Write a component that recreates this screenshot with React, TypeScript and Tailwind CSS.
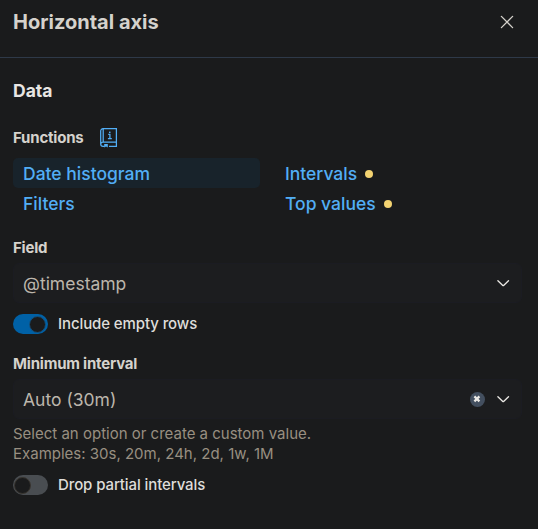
import type { ReactNode } from 'react';

function Label({ children }: { children: ReactNode }) {
  return <div className="text-[15px] leading-5 font-bold tracking-[-0.2px] text-[#d5d2cc]">{children}</div>;
}

function Chevron() {
  return (
    <svg width="20" height="20" viewBox="0 0 20 20" fill="none" stroke="#ebe9e5" strokeWidth="1.35" strokeLinecap="round">
      <path d="M4.9 7.8l4.9 4.6a.6.6 0 0 0 .8 0l4.9-4.6" />
    </svg>
  );
}

function DocsIcon() {
  return (
    <svg width="18" height="20" viewBox="0 0 18 20" fill="none" stroke="#52aef5" strokeWidth="1.25">
      <path d="M4.6 18.4H3A2.3 2.3 0 0 1 .7 16.1V3A2.3 2.3 0 0 1 3 .7h13.4v13.4H3a2.1 2.1 0 0 0-2.1 1.6M3.2.7v13.4M9 18.4h7.4v-4.3" />
      <path d="M4.2 16.1h3.6v3.3l-1.8-.8-1.8.8z" fill="#52aef5" stroke="none" />
      <path d="M8.2 6.4h1.7v4.3M7.9 10.7h3.9" />
      <rect x="9" y="3.6" width="1.5" height="1.4" fill="#52aef5" stroke="none" />
    </svg>
  );
}

function Toggle({ on, label }: { on: boolean; label: string }) {
  return (
    <div className="flex h-5 items-center gap-[10px]">
      <span className={`flex h-5 w-[35px] items-center rounded-full ${on ? 'justify-end bg-[#0061a6] pr-[2px]' : 'justify-start bg-[#494d51]'}`}>
        <span className={`size-[17px] rounded-full border bg-[#1a1b1c] ${on ? 'border-[#13517f]' : 'ml-[1px] border-[#39352f]'}`} />
      </span>
      <span className="text-[15px] leading-5 font-medium tracking-[-0.1px] text-[#dfddd9]">{label}</span>
    </div>
  );
}

function Fn({ name, active, dot }: { name: string; active?: boolean; dot?: boolean }) {
  return (
    <div className={`flex h-[30px] items-center rounded-[5px] pt-[2px] pl-[10px] text-[17.5px] leading-7 font-medium text-[#52aef5] ${active ? 'bg-[#18232b]' : ''}`}>
      {name}
      {dot && <span className="ml-2 size-2 rounded-full bg-[#f3d371]" />}
    </div>
  );
}

export default function App() {
  return (
    <div className="h-[529px] w-[538px] bg-[#1a1b1c] font-['Inter',sans-serif]">
      <header className="flex h-[58px] items-start justify-between border-b border-[#2e3948] pr-[21px] pl-[13px]">
        <h1 className="mt-[7px] text-[20px] leading-[30px] font-bold text-[#d5d2cc]">Horizontal axis</h1>
        <svg className="mt-[12px]" width="20" height="20" viewBox="0 0 20 20" stroke="#d5d2cc" strokeWidth="1.3" strokeLinecap="round">
          <path d="M4.4 4.4l11.2 11.2M15.6 4.4L4.4 15.6" />
        </svg>
      </header>
      <main className="flex flex-col pr-[16px] pl-[13px]">
        <h2 className="mt-[20px] mb-[1px] text-[17.5px] leading-[25px] font-bold text-[#e8e6e3]">Data</h2>
        <div className="mt-[24px] flex h-5 items-center gap-4">
          <Label>Functions</Label>
          <DocsIcon />
        </div>
        <div className="mt-[10px] grid grid-cols-[247px_247px] gap-x-[15px]">
          <Fn name="Date histogram" active />
          <Fn name="Intervals" dot />
          <Fn name="Filters" />
          <Fn name="Top values" dot />
        </div>
        <div className="mt-5"><Label>Field</Label></div>
        <div className="mt-[5px] flex h-10 items-center justify-between rounded-[6px] border border-[#1b1c22] bg-[#1c1d1f] pr-2 pl-[9px] text-[17.5px] text-[#bcb6ac]">
          <span className="pt-[2px]">@timestamp</span>
          <Chevron />
        </div>
        <div className="mt-[11px]"><Toggle on label="Include empty rows" /></div>
        <div className="mt-5"><Label>Minimum interval</Label></div>
        <div className="mt-[5px] flex h-10 items-center rounded-[6px] border border-[#1b1c22] bg-[#1c1d1f] pr-2 pl-[9px] text-[17.5px] text-[#bcb6ac]">
          <span className="flex-1 pt-[2px]">Auto (30m)</span>
          <svg className="mr-2" width="15" height="15" viewBox="0 0 15 15">
            <circle cx="7.5" cy="7.5" r="7.5" fill="#434f5f" />
            <path d="M4.4 4.4l5 5M9.4 4.4l-5 5" stroke="#ebe9e5" strokeWidth="2.2" />
          </svg>
          <Chevron />
        </div>
        <p className="mt-[5px] text-[15px] leading-5 text-[#988f81]">
          Select an option or create a custom value.
          <br />
          Examples: 30s, 20m, 24h, 2d, 1w, 1M
        </p>
        <div className="mt-[11px]"><Toggle on={false} label="Drop partial intervals" /></div>
      </main>
    </div>
  );
}
